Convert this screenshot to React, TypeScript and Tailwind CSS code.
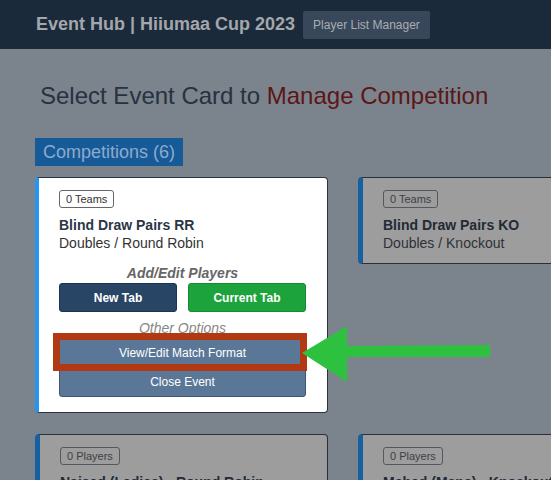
import React from 'react';

interface EventCard {
  id: string;
  count: string;
  title: string;
  subtitle: string;
}

const events: EventCard[] = [
  { id: 'bd-rr', count: '0 Teams', title: 'Blind Draw Pairs RR', subtitle: 'Doubles / Round Robin' },
  { id: 'bd-ko', count: '0 Teams', title: 'Blind Draw Pairs KO', subtitle: 'Doubles / Knockout' },
  { id: 'ladies-rr', count: '0 Players', title: 'Naised (Ladies) - Round Robin', subtitle: 'Singles / Round Robin' },
  { id: 'mens-ko', count: '0 Players', title: 'Mehed (Mens) - Knockout', subtitle: 'Singles / Knockout' },
];

function ActiveCard({ card }: { card: EventCard }) {
  return (
    <div className="bg-white border border-[#2a3440] border-l-[4px] border-l-[#2196f3] rounded-[4px] pl-[20px] pr-[21px] pt-[12px] pb-[15px]">
      <div className="w-fit border border-[#666] rounded-[3px] px-[6px] h-[18px] leading-[16px] text-[11px] text-[#333]">
        {card.count}
      </div>
      <div className="mt-[8px] text-[14px] leading-[18px] font-bold text-[#2b3645]">{card.title}</div>
      <div className="text-[14px] leading-[18px] text-[#333]">{card.subtitle}</div>

      <div className="mt-[12px] text-center text-[14px] leading-[18px] font-bold italic text-[#666]">
        Add/Edit Players
      </div>
      <div className="mt-[1px] flex gap-[11px]">
        <button className="flex-1 h-[29px] rounded-[3px] bg-[#284566] border border-[#1d3450] text-white text-[12px] font-bold">
          New Tab
        </button>
        <button className="flex-1 h-[29px] rounded-[3px] bg-[#1ca33c] border border-[#168a31] text-white text-[12px] font-bold">
          Current Tab
        </button>
      </div>

      <div className="mt-[7px] text-center text-[14px] leading-[18px] italic text-[#888]">Other Options</div>
      <div className="mt-[1px] flex flex-col">
        <button className="h-[29px] rounded-t-[3px] bg-[#5b7797] border border-[#3f5571] text-white text-[12px]">
          View/Edit Match Format
        </button>
        <button className="h-[31px] -mt-px rounded-b-[3px] bg-[#5b7797] border border-[#3f5571] text-white text-[12px]">
          Close Event
        </button>
      </div>
    </div>
  );
}

function DimCard({ card }: { card: EventCard }) {
  return (
    <div className="self-start bg-[#9d9d9d] border border-[#27303b] border-l-[5px] border-l-[#1560a0] rounded-[4px] pl-[20px] pr-[21px] pt-[12px] pb-[11px]">
      <div className="w-fit border border-[#55595e] rounded-[3px] px-[6px] h-[18px] leading-[16px] text-[11px] text-[#3c4046]">
        {card.count}
      </div>
      <div className="mt-[8px] text-[14px] leading-[18px] font-bold text-[#222a35] whitespace-nowrap">{card.title}</div>
      <div className="text-[14px] leading-[18px] text-[#2e3238] whitespace-nowrap">{card.subtitle}</div>
    </div>
  );
}

export default function App() {
  return (
    <div className="relative h-screen overflow-hidden bg-[#7b838d] font-['Liberation_Sans',Arial,sans-serif]">
      {/* Header */}
      <header className="h-[49px] bg-[#1b2a3b] flex items-center pl-[36px] gap-[8px]">
        <span className="text-[18px] font-bold text-[#a3a7ab] whitespace-nowrap">Event Hub | Hiiumaa Cup 2023</span>
        <button className="h-[28px] px-[10px] rounded-[2px] bg-[#38475a] text-[12px] text-[#a9adb2] whitespace-nowrap">
          Player List Manager
        </button>
      </header>

      <main className="pl-[35px]">
        <h1 className="mt-[31px] ml-[5px] text-[24px] leading-[32px] text-[#27313f] whitespace-nowrap">
          Select Event Card to <span className="text-[#5c1616]">Manage Competition</span>
        </h1>

        <div className="mt-[26px] w-fit h-[28px] px-[8px] bg-[#175a98] text-[18px] leading-[28px] text-[#8cabcb]">
          Competitions (6)
        </div>

        <div className="mt-[11px] grid grid-cols-[293px_293px] gap-x-[30px] gap-y-[21px]">
          <ActiveCard card={events[0]} />
          <DimCard card={events[1]} />
          <DimCard card={events[2]} />
          <DimCard card={events[3]} />
        </div>
      </main>

      {/* Annotation: highlight box + arrow */}
      <div className="absolute left-[53px] top-[333px] w-[254px] h-[38px] border-[7px] border-[#b23a12]" />
      <svg className="absolute left-[300px] top-[324px]" width="192" height="60" viewBox="0 0 192 60">
        <polygon points="2,29 47,2 47,22 190,21 190,33 47,33 47,58" fill="#2ec13f" />
      </svg>
    </div>
  );
}
